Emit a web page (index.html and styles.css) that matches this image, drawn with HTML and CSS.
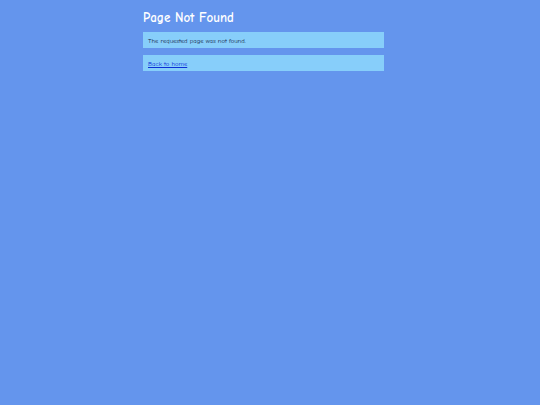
FILE: index.html
```html
<!DOCTYPE html>
<html lang="en">
<head>
    <meta charset="UTF-8">
    <meta name="viewport" content="width=device-width, initial-scale=1.0">
    <title>Page Not Found</title>
    <link rel="stylesheet" href="styles.css">
</head>
<body>

<div class="container">
    <h1>Page Not Found</h1>

    <div class="box">The requested page was not found.</div>

    <div class="box"><a href="/">Back to home</a></div>
</div>

</body>
</html>
```

FILE: styles.css
```css
body {
    font-family: "Comic Sans MS", "Comic Neue", "DejaVu Sans", sans-serif;
    margin: 0;
    background-color: #6495ed;
}
.container {
    width: 241px;
    margin-left: 143px;
    padding-top: 9px;
}
h1 {
    color: #fff;
    font-size: 13px;
    font-weight: bold;
    margin: 0 0 5px 0;
    line-height: 18px;
}
.box {
    background-color: #87cefa;
    color: #14264a;
    font-size: 6.6px;
    line-height: 8px;
    padding: 5px 5px 3px;
    margin-bottom: 7px;
}
.box a {
    color: #0a2fd6;
}
```
